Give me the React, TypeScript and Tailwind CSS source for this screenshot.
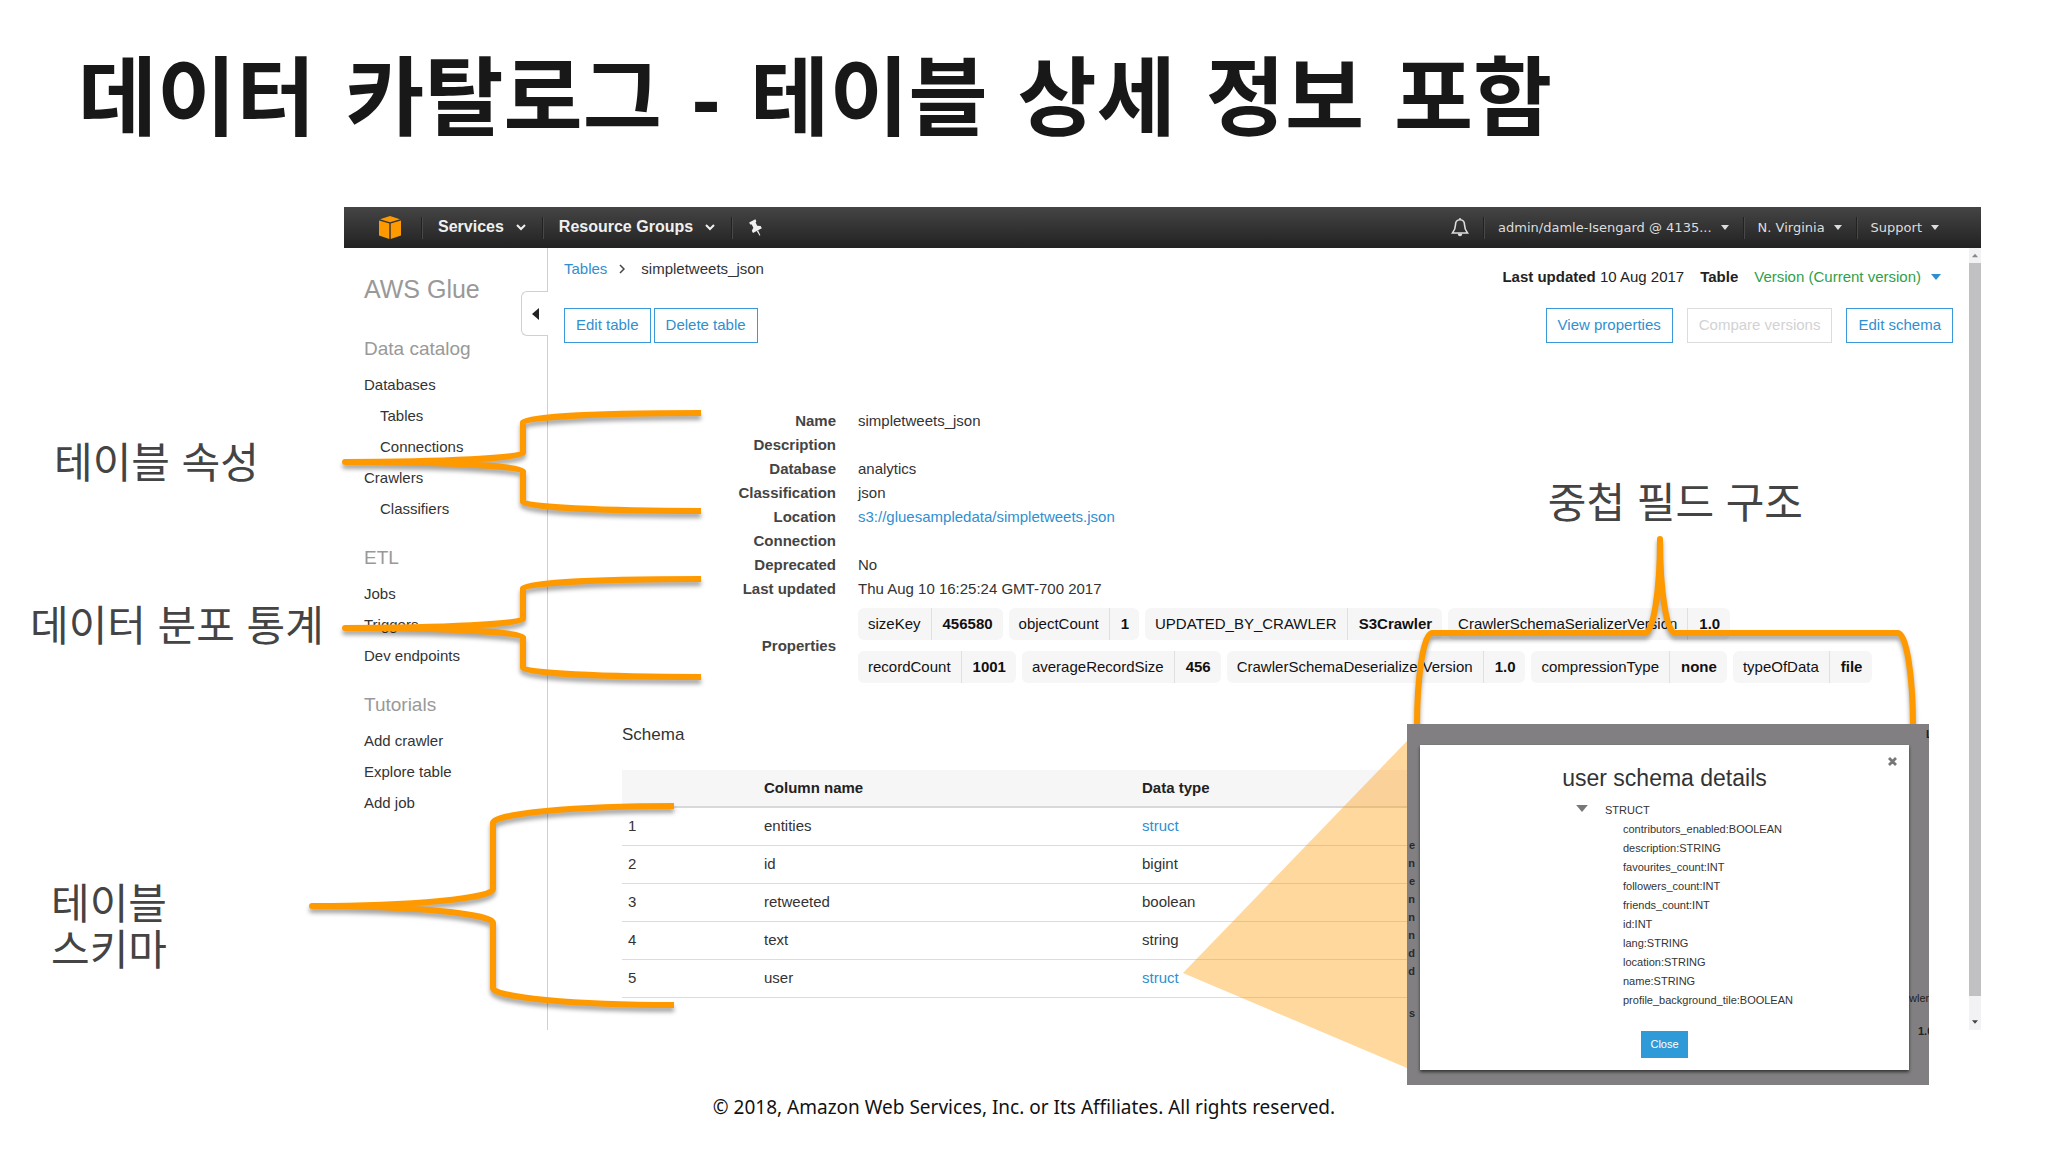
import type { ReactNode } from "react";

const catalog = [
  { label: "Databases", nested: false },
  { label: "Tables", nested: true },
  { label: "Connections", nested: true },
  { label: "Crawlers", nested: false },
  { label: "Classifiers", nested: true },
];
const etl = ["Jobs", "Triggers", "Dev endpoints"].map((label) => ({ label, nested: false }));
const tutorials = ["Add crawler", "Explore table", "Add job"].map((label) => ({ label, nested: false }));

const details = [
  { term: "Name", value: "simpletweets_json" },
  { term: "Description", value: "" },
  { term: "Database", value: "analytics" },
  { term: "Classification", value: "json" },
  { term: "Location", value: "s3://gluesampledata/simpletweets.json", link: true },
  { term: "Connection", value: "" },
  { term: "Deprecated", value: "No" },
  { term: "Last updated", value: "Thu Aug 10 16:25:24 GMT-700 2017" },
];

const properties = [
  [
    ["sizeKey", "456580"],
    ["objectCount", "1"],
    ["UPDATED_BY_CRAWLER", "S3Crawler"],
    ["CrawlerSchemaSerializerVersion", "1.0"],
  ],
  [
    ["recordCount", "1001"],
    ["averageRecordSize", "456"],
    ["CrawlerSchemaDeserializerVersion", "1.0"],
    ["compressionType", "none"],
    ["typeOfData", "file"],
  ],
];

const columns = [
  { name: "entities", type: "struct" },
  { name: "id", type: "bigint" },
  { name: "retweeted", type: "boolean" },
  { name: "text", type: "string" },
  { name: "user", type: "struct" },
];

const fields = [
  "contributors_enabled:BOOLEAN",
  "description:STRING",
  "favourites_count:INT",
  "followers_count:INT",
  "friends_count:INT",
  "id:INT",
  "lang:STRING",
  "location:STRING",
  "name:STRING",
  "profile_background_tile:BOOLEAN",
];

function Caret({ className }: { className: string }) {
  return (
    <svg viewBox="0 0 10 6" className={className} fill="currentColor" aria-hidden="true">
      <path d="M0 0h10L5 6z" />
    </svg>
  );
}

function ChevronDown() {
  return (
    <svg viewBox="0 0 10 7" className="h-[7px] w-[10px]" fill="none" stroke="currentColor" strokeWidth="2" aria-hidden="true">
      <path d="M1 1l4 4 4-4" />
    </svg>
  );
}

function Divider() {
  return <span className="h-[22px] w-px bg-[#222] shadow-[1px_0_0_#484848]" />;
}

function TopBar() {
  return (
    <nav className="flex h-[41px] items-center bg-linear-to-b from-[#454545] to-[#222] text-[#f0f0f0]">
      <a href="#home" aria-label="AWS" className="ml-[35px]">
        <svg viewBox="0 0 22 23" className="h-[23px] w-[22px]" fill="#f90" aria-hidden="true">
          <path d="M1 3.200 11 0l10 3.200-10 3z" />
          <path d="M0 4.600l10.300 3V23L0 19.600z" />
          <path d="M22 4.600l-10.300 3V23L22 19.600z" />
        </svg>
      </a>
      <div className="ml-5 flex items-center">
        <Divider />
        <button className="flex items-center gap-3 px-4 pb-px text-base font-bold">
          Services <ChevronDown />
        </button>
        <Divider />
        <button className="flex items-center gap-3 px-4 pb-px text-base font-bold">
          Resource Groups <ChevronDown />
        </button>
        <Divider />
      </div>
      <button aria-label="Pin" className="ml-4">
        <svg viewBox="0 0 16 18" className="h-[18px] w-4" fill="currentColor" aria-hidden="true">
          <g transform="rotate(-28 8 9)">
            <path d="M4.500 1h7v2.200l-1.300.8v3.500l2.800 2V12H3V9.500l2.800-2V4l-1.300-.8z" />
            <path d="M7.200 12h1.600l-.4 5.500h-.8z" />
          </g>
        </svg>
      </button>
      <div className="ml-auto flex items-center font-['DejaVu_Sans',sans-serif] text-[13px] text-[#ddd]">
        <button aria-label="Notifications" className="mr-[14px]">
          <svg viewBox="0 0 18 19" className="h-[19px] w-[18px]" fill="none" stroke="currentColor" strokeWidth="1.600" aria-hidden="true">
            <path d="M9 1.800c-3.200 0-4.500 2.200-4.500 5C4.500 11 3 13 1.500 15h15C15 13 13.500 11 13.500 6.800c0-2.800-1.300-5-4.500-5z" />
            <path d="M9 0v2" />
            <path d="M6.800 15.500a2.200 2.800 0 0 0 4.400 0z" fill="currentColor" stroke="none" />
          </svg>
        </button>
        <Divider />
        <button className="flex items-center gap-[9px] px-[14px]">
          admin/damle-Isengard @ 4135... <Caret className="h-[5px] w-2" />
        </button>
        <Divider />
        <button className="flex items-center gap-[9px] px-[14px]">
          N. Virginia <Caret className="h-[5px] w-2" />
        </button>
        <Divider />
        <button className="mr-7 flex items-center gap-[9px] px-[14px]">
          Support <Caret className="h-[5px] w-2" />
        </button>
      </div>
    </nav>
  );
}

function NavSection({ title, items }: { title: string; items: { label: string; nested: boolean }[] }) {
  return (
    <section>
      <h3 className="text-[19px] leading-6 text-[#999]">{title}</h3>
      <ul className="mt-2 leading-[31px]">
        {items.map((item) => (
          <li key={item.label} className={item.nested ? "pl-4" : ""}>
            <a href="#nav">{item.label}</a>
          </li>
        ))}
      </ul>
    </section>
  );
}

function Sidebar() {
  return (
    <aside className="relative w-[204px] shrink-0 border-r border-[#d0d0d4] pt-[25px] pl-5">
      <h2 className="text-[25px] leading-8 text-[#999]">AWS Glue</h2>
      <div className="mt-8 flex flex-col gap-[22px]">
        <NavSection title="Data catalog" items={catalog} />
        <NavSection title="ETL" items={etl} />
        <NavSection title="Tutorials" items={tutorials} />
      </div>
      <button
        aria-label="Collapse"
        className="absolute top-[43px] -right-px flex h-[45px] w-[27px] items-center justify-center rounded-l-md border border-r-0 border-[#d0d0d4] bg-white"
      >
        <svg viewBox="0 0 7 12" className="h-3 w-[7px]" fill="#222" aria-hidden="true">
          <path d="M7 0v12L0 6z" />
        </svg>
      </button>
    </aside>
  );
}

function OutlineButton({ children, disabled = false }: { children: ReactNode; disabled?: boolean }) {
  return (
    <button
      disabled={disabled}
      className="h-[35px] border border-[#3a9ad9] px-[11px] text-[#2f8fd0] disabled:border-[#dcdcde] disabled:text-[#d2d2d4]"
    >
      {children}
    </button>
  );
}

function Toolbar() {
  return (
    <div className="flex justify-between pt-[11px] pr-4 pl-4">
      <div>
        <div className="flex h-5 items-center">
          <a href="#tables" className="text-[#2f8fd0]">
            Tables
          </a>
          <svg viewBox="0 0 6 10" className="mr-4 ml-3 h-[10px] w-[6px]" fill="none" stroke="#444" strokeWidth="1.500" aria-hidden="true">
            <path d="M1 1l4 4-4 4" />
          </svg>
          <span>simpletweets_json</span>
        </div>
        <div className="mt-[29px] flex gap-[3px]">
          <OutlineButton>Edit table</OutlineButton>
          <OutlineButton>Delete table</OutlineButton>
        </div>
      </div>
      <div className="flex flex-col items-end pt-2">
        <div className="flex h-5 items-center pr-3 text-[#222]">
          <span>
            <b>Last updated</b> 10 Aug 2017
          </span>
          <b className="ml-4">Table</b>
          <button className="ml-4 flex items-center gap-[10px] text-[#2fa04a]">
            Version (Current version) <Caret className="h-[6px] w-[10px] text-[#2f8fd0]" />
          </button>
        </div>
        <div className="mt-[21px] flex gap-[14px]">
          <OutlineButton>View properties</OutlineButton>
          <OutlineButton disabled>Compare versions</OutlineButton>
          <OutlineButton>Edit schema</OutlineButton>
        </div>
      </div>
    </div>
  );
}

function Details() {
  return (
    <dl className="mt-[66px] grid grid-cols-[288px_1fr] gap-x-[22px] leading-6">
      {details.map((row) => (
        <div key={row.term} className="col-span-2 grid grid-cols-subgrid">
          <dt className="text-right font-bold text-[#444]">{row.term}</dt>
          <dd>
            {row.link ? (
              <a href="#location" className="text-[#2f8fd0]">
                {row.value}
              </a>
            ) : (
              row.value
            )}
          </dd>
        </div>
      ))}
      <dt className="self-center pt-[7px] text-right font-bold text-[#444]">Properties</dt>
      <dd className="flex flex-col gap-[11px] pt-[7px] leading-8 text-[#111]">
        {properties.map((line, i) => (
          <ul key={i} className="flex gap-[6px]">
            {line.map(([key, value]) => (
              <li key={key} className="flex rounded-md bg-[#f7f6f7] whitespace-nowrap">
                <span className="px-[10px]">{key}</span>
                <b className="border-l border-[#e0e0e2] pr-[10px] pl-[11px]">{value}</b>
              </li>
            ))}
          </ul>
        ))}
      </dd>
    </dl>
  );
}

function Schema() {
  return (
    <section className="mt-10 pr-[70px] pl-[74px]">
      <h3 className="text-[17px] leading-6">Schema</h3>
      <table className="mt-[23px] w-full table-fixed border-collapse text-left">
        <thead>
          <tr className="h-[37px] border-b-2 border-[#d8d8da] bg-[#f7f6f7] text-[#222]">
            <th className="w-[142px]" aria-label="Number" />
            <th className="w-[378px]">Column name</th>
            <th>Data type</th>
          </tr>
        </thead>
        <tbody>
          {columns.map((column, i) => (
            <tr key={column.name} className="h-[38px] border-b border-[#dcdcde]">
              <td className="pl-[6px]">{i + 1}</td>
              <td>{column.name}</td>
              <td>
                {column.type === "struct" ? (
                  <a href="#struct" className="text-[#2f8fd0]">
                    struct
                  </a>
                ) : (
                  column.type
                )}
              </td>
            </tr>
          ))}
        </tbody>
      </table>
    </section>
  );
}

function ScrollBar() {
  return (
    <div className="flex w-3 shrink-0 flex-col items-center bg-[#f2f1f3]">
      <div className="flex h-[15px] items-center">
        <Caret className="h-[5px] w-[6px] rotate-180 text-[#888]" />
      </div>
      <div className="w-full flex-1 bg-[#c1c0c3]" />
      <div className="flex h-[34px] items-end pb-[6px]">
        <Caret className="h-[4px] w-[6px] text-[#444]" />
      </div>
    </div>
  );
}

function SchemaDialog() {
  return (
    <div className="absolute top-[517px] right-[52px] flex h-[361px] w-[522px] overflow-hidden bg-[#817f81] pt-[21px] pb-[15px] text-[11px]">
      <div className="flex w-[13px] shrink-0 flex-col items-end pt-[91px] pr-[5px] leading-[18px] font-bold text-[#2a2a2a]">
        {details.map((row) => (
          <span key={row.term}>{row.term.slice(-1)}</span>
        ))}
        <span className="mt-6">s</span>
      </div>
      <div
        role="dialog"
        aria-label="user schema details"
        className="relative flex flex-1 flex-col items-center bg-white pt-[18px] shadow-[0_2px_3px_rgba(0,0,0,0.6)]"
      >
        <button aria-label="Dismiss" className="absolute top-3 right-[12px]">
          <svg viewBox="0 0 9 9" className="h-[9px] w-[9px]" stroke="#777" strokeWidth="2.800" aria-hidden="true">
            <path d="M1 1l7 7M8 1L1 8" />
          </svg>
        </button>
        <h2 className="text-[23px] leading-[30px] text-[#333]">user schema details</h2>
        <div className="mt-2 flex w-full items-start pl-[156px] leading-[19px]">
          <button aria-label="Toggle STRUCT" className="mt-1">
            <Caret className="h-[7px] w-3 text-[#777]" />
          </button>
          <div className="ml-[17px]">
            STRUCT
            <ul className="pl-[18px]">
              {fields.map((field) => (
                <li key={field}>{field}</li>
              ))}
            </ul>
          </div>
        </div>
        <button className="mt-[21px] h-[27px] w-[47px] bg-[#2f9ad8] text-white">Close</button>
      </div>
      <div className="flex w-5 shrink-0 flex-col leading-[18px] whitespace-nowrap text-[#222]">
        <b className="-mt-5 pl-[17px]">L</b>
        <span className="mt-[246px]">wler</span>
        <b className="mt-[15px] pl-[9px]">1.0</b>
      </div>
    </div>
  );
}

function Brace({ d, className, viewBox }: { d: string; className: string; viewBox: string }) {
  return (
    <svg
      viewBox={viewBox}
      className={`pointer-events-none absolute overflow-visible drop-shadow-[0_4px_2px_rgba(0,0,0,0.35)] ${className}`}
      fill="none"
      stroke="#f90"
      strokeWidth="6"
      strokeLinejoin="round"
      aria-hidden="true"
    >
      <path d={d} />
    </svg>
  );
}

const sideBrace = "M356 0A178 9 0 0 0 178 9V40A178 9 0 0 1 0 49A178 9 0 0 1 178 58V89A178 9 0 0 0 356 98";

export default function App() {
  return (
    <main className="bg-white font-['Liberation_Sans',Arial,sans-serif] text-[15px] text-[#333]">
      <h1 className="h-[207px] pt-[37px] pl-[78px] font-['DejaVu_Sans','Noto_Sans_CJK_KR',sans-serif] text-[86px] leading-[124px] font-bold whitespace-nowrap text-[#181818]">
        데이터 카탈로그 <span className="font-['Liberation_Sans',sans-serif]">-</span> 테이블 상세 정보 포함
      </h1>
      <div className="flex pr-[67px]">
        <div className="w-[344px] shrink-0 font-['Liberation_Sans','Noto_Sans_CJK_KR',sans-serif] text-[42px] leading-[46px] whitespace-nowrap text-[#444]">
          <p className="pt-[234px] pl-[54px]">테이블 속성</p>
          <p className="pt-[117px] pl-[30px]">데이터 분포 통계</p>
          <p className="pt-[232px] pl-[51px]">
            테이블
            <br />
            스키마
          </p>
        </div>
        <div className="relative min-w-0 flex-1">
          <TopBar />
          <div className="flex">
            <Sidebar />
            <div className="min-w-0 flex-1 pb-8">
              <Toolbar />
              <Details />
              <Schema />
            </div>
            <ScrollBar />
          </div>

          <Brace d={sideBrace} viewBox="0 0 356 98" className="top-[206px] left-px h-[98px] w-[356px]" />
          <Brace d={sideBrace} viewBox="0 0 356 98" className="top-[372px] left-px h-[98px] w-[356px]" />
          <Brace
            d="M362 0A181 17 0 0 0 181 17V83A181 17 0 0 1 0 100A181 17 0 0 1 181 117V182A181 17 0 0 0 362 199"
            viewBox="0 0 362 199"
            className="top-[599px] -left-8 h-[199px] w-[362px]"
          />
          <svg viewBox="0 0 224 327" className="pointer-events-none absolute top-[534px] right-[574px] h-[327px] w-[224px]" aria-hidden="true">
            <path d="M0 232L224 0V327z" fill="#f90" fillOpacity="0.38" />
          </svg>
          <p className="absolute top-[274px] right-[178px] font-['Liberation_Sans','Noto_Sans_CJK_KR',sans-serif] text-[42px] leading-[46px] whitespace-nowrap text-[#444]">
            중첩 필드 구조
          </p>
          <Brace
            d="M0 188A15 94 0 0 1 15 94H228A15 94 0 0 0 243 0A15 94 0 0 0 258 94H481A15 94 0 0 1 496 188"
            viewBox="0 0 496 188"
            className="top-[332px] right-[68px] h-[188px] w-[496px]"
          />
          <SchemaDialog />
        </div>
      </div>
      <footer className="pt-[65px] pb-8 text-center font-['Noto_Sans',sans-serif] text-[19px] leading-6 text-[#111]">
        © 2018, Amazon Web Services, Inc. or Its Affiliates. All rights reserved.
      </footer>
    </main>
  );
}
